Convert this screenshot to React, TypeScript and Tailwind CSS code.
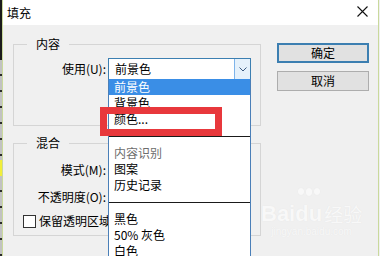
const font = "font-['Microsoft_YaHei','Noto_Sans_CJK_SC',sans-serif]";

type ListItem = { label: string; kind?: "selected" | "muted" | "separator" };

const listItems: ListItem[] = [
  { label: "前景色", kind: "selected" },
  { label: "背景色" },
  { label: "颜色..." },
  { label: "", kind: "separator" },
  { label: "内容识别", kind: "muted" },
  { label: "图案" },
  { label: "历史记录" },
  { label: "", kind: "separator" },
  { label: "黑色" },
  { label: "50% 灰色" },
  { label: "白色" },
];

function GroupBox({
  title,
  className,
  children,
}: {
  title: string;
  className: string;
  children: React.ReactNode;
}) {
  return (
    <div className={`relative border border-[#d5d5d5] ${className}`}>
      <span className="absolute left-[13px] top-[-9px] bg-[#f0f0f0] px-[9px] text-[12px] leading-[16px]">
        {title}
      </span>
      {children}
    </div>
  );
}

function EdgeStrip() {
  return (
    <div className="flex w-[2px] flex-col">
      <div className="h-[60px] bg-[#1b1b1b]" />
      <div className="h-[100px] bg-[repeating-linear-gradient(#c2c2c2_0px,#c2c2c2_14px,#2a2a2a_14px,#2a2a2a_16px)]" />
      <div className="h-[16px] bg-[#f2ee3a]" />
      <div className="flex-1 bg-[repeating-linear-gradient(#c2c2c2_0px,#c2c2c2_14px,#2a2a2a_14px,#2a2a2a_16px)]" />
    </div>
  );
}

export default function App() {
  return (
    <div className={`flex h-[256px] w-[380px] overflow-hidden bg-[#f0f0f0] text-black ${font}`}>
      <EdgeStrip />
      <div className="relative flex h-[256px] w-[377px] flex-col overflow-hidden border-x border-[#c9d99c] bg-[#f0f0f0]">
        {/* title bar */}
        <div className="flex h-[25px] items-center justify-between bg-white pl-[4px] pr-[10px]">
          <span className="text-[12px] leading-[16px]">填充</span>
          <svg width="11" height="11" viewBox="0 0 11 11" className="mb-[2px]">
            <path d="M0.5 0.5 L10.5 10.5 M10.5 0.5 L0.5 10.5" stroke="#111" strokeWidth="1.1" />
          </svg>
        </div>

        <div className="flex pl-[10px]">
          <div className="flex w-[248px] flex-col pt-[19px]">
            <GroupBox title="内容" className="h-[82px]">
              <div className="flex items-center pt-[13px]">
                <span className="w-[92px] text-right text-[12px] leading-[16px]">使用(U):</span>
                <div className="ml-[2px] flex h-[22px] w-[143px] items-stretch border border-[#3c7fb1] bg-white">
                  <span className="flex-1 pl-[6px] text-[12px] leading-[20px]">前景色</span>
                  <div className="flex w-[16px] items-center justify-center border-l border-[#7eb4ea] bg-[#e5f1fb]">
                    <svg width="8" height="5" viewBox="0 0 8 5">
                      <path d="M0.5 0.5 L4 4 L7.5 0.5" fill="none" stroke="#3c5a80" strokeWidth="1" />
                    </svg>
                  </div>
                </div>
              </div>
            </GroupBox>

            <GroupBox title="混合" className="mt-[17px] h-[93px]">
              <div className="flex flex-col pt-[18px] text-[12px] leading-[16px]">
                <span className="w-[92px] text-right">模式(M):</span>
                <span className="mt-[11px] w-[92px] text-right">不透明度(O):</span>
                <div className="mt-[8px] flex items-center pl-[9px]">
                  <div className="h-[13px] w-[13px] border border-[#333] bg-white" />
                  <span className="ml-[3px] whitespace-nowrap">保留透明区域</span>
                </div>
              </div>
            </GroupBox>
          </div>

          <div className="ml-[16px] flex w-[92px] flex-col gap-[8px] pt-[18px]">
            <button className="h-[20px] border-2 border-[#3c7fb1] bg-[#e1e1e1] text-[12px] leading-[14px]">
              确定
            </button>
            <button className="h-[20px] border border-[#adadad] bg-[#e1e1e1] text-[12px] leading-[16px]">
              取消
            </button>
          </div>
        </div>

        {/* open dropdown list */}
        <div className="absolute left-[105px] top-[79px] flex h-[190px] w-[143px] flex-col border-x border-[#4a7fb8] bg-white text-[12px]">
          {listItems.map((item, i) =>
            item.kind === "separator" ? (
              <div key={i} className="flex h-[18px] items-center">
                <div className="h-px w-full bg-[#1a1a1a]" />
              </div>
            ) : (
              <div
                key={i}
                className={`h-[16px] pl-[5px] leading-[16px] ${
                  item.kind === "selected"
                    ? "bg-[#3a8ee6] text-white"
                    : item.kind === "muted"
                      ? "text-[#6d6d6d]"
                      : ""
                }`}
              >
                {item.label}
              </div>
            ),
          )}
        </div>

        {/* red highlight */}
        <div className="absolute left-[97px] top-[107px] h-[29px] w-[122px] border-[7px] border-[#e8383c]" />

        {/* watermark */}
        <div className="absolute left-[258px] top-[202px] flex flex-col items-center text-[#f8f8f8] [text-shadow:0_0_1px_#e2e2e2]">
          <div className="flex items-end font-['Liberation_Sans',sans-serif] text-[22px] font-bold leading-[24px]">
            <span>Bai</span>
            <span className="relative flex flex-col items-center">
              <span className="absolute top-[-14px] flex gap-[2px]">
                <span className="h-[7px] w-[6px] rounded-full bg-[#f8f8f8] shadow-[0_0_1px_#e2e2e2]" />
                <span className="h-[8px] w-[6px] rounded-full bg-[#f8f8f8] shadow-[0_0_1px_#e2e2e2]" />
                <span className="h-[7px] w-[6px] rounded-full bg-[#f8f8f8] shadow-[0_0_1px_#e2e2e2]" />
              </span>
              <span>du</span>
            </span>
            <span className={`ml-[2px] text-[19px] font-normal ${font}`}>经验</span>
          </div>
          <span className="font-['Liberation_Sans',sans-serif] text-[10px] leading-[12px]">jingyan.baidu.com</span>
        </div>
      </div>
    </div>
  );
}
